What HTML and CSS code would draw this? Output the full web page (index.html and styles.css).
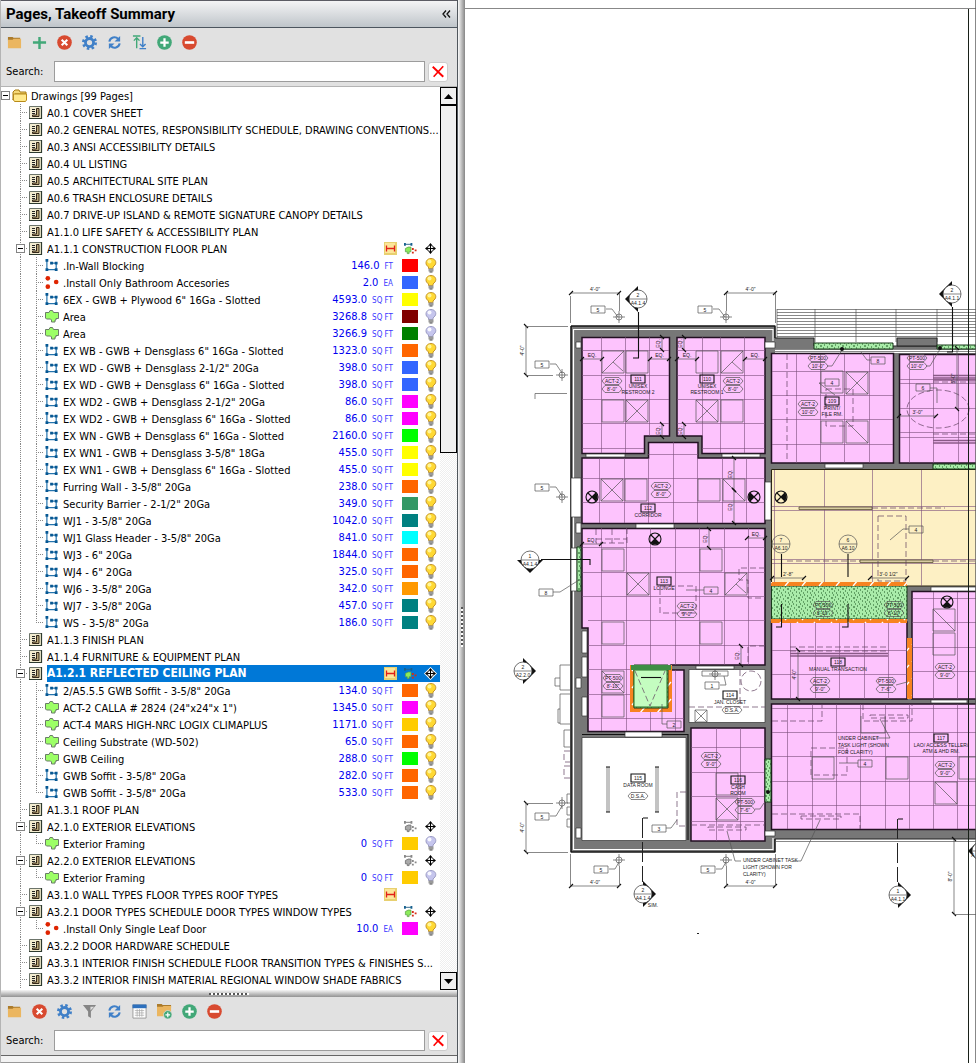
FILE: index.html
```html
<!DOCTYPE html>
<html lang="en">
<head>
    <meta charset="UTF-8">
    <meta name="viewport" content="width=device-width, initial-scale=1.0">
    <title>Takeoff Summary</title>
    <link rel="stylesheet" href="styles.css">
</head>
<body>
    <svg class="defs" aria-hidden="true">
        <symbol id="i-folder" viewBox="0 0 16 16"><path d="M1 2h5l1 1h7v3H1z" fill="#ab7b2c"/><path d="M1 5h5l1-1h8v10H1z" fill="#ebb660"/></symbol>
        <symbol id="i-plus" viewBox="0 0 16 16"><path d="M8 2v13M1 8h14" stroke="#42a878" stroke-width="2.6"/></symbol>
        <symbol id="i-cancel" viewBox="0 0 16 16"><circle cx="8" cy="8" r="7.8" fill="#d84a30"/><path d="M5 5l6 6M11 5l-6 6" stroke="#fff" stroke-width="2.2"/></symbol>
        <symbol id="i-gear" viewBox="0 0 16 16"><circle cx="8" cy="8" r="6.5" fill="none" stroke="#4080c8" stroke-width="3" stroke-dasharray="2.6 2.5"/><circle cx="8" cy="8" r="4.3" fill="none" stroke="#4080c8" stroke-width="3"/></symbol>
        <symbol id="i-refresh" viewBox="0 0 16 16"><path d="M2.5 7a5.5 5.5 0 0 1 9.5-2.8M13.5 9a5.5 5.5 0 0 1-9.5 2.8" fill="none" stroke="#4080c8" stroke-width="2.2"/><path d="M14 1v6H8zM2 15V9h6z" fill="#4080c8"/></symbol>
        <symbol id="i-sort" viewBox="0 0 16 16"><path d="M5 14V3M2 6l3-3 3 3M1 1h8" fill="none" stroke="#42a878" stroke-width="1.5"/><path d="M11.500 2v10M8.500 9.500l3 3 3-3M8 14.500h7" fill="none" stroke="#4080c8" stroke-width="1.5"/></symbol>
        <symbol id="i-add" viewBox="0 0 16 16"><circle cx="8" cy="8" r="7.8" fill="#42a878"/><path d="M8 3.500v9M3.500 8h9" stroke="#fff" stroke-width="2.4"/></symbol>
        <symbol id="i-remove" viewBox="0 0 16 16"><circle cx="8" cy="8" r="7.8" fill="#d84a30"/><path d="M3 8h10" stroke="#fff" stroke-width="2.8"/></symbol>
        <symbol id="i-filter" viewBox="0 0 16 16"><path d="M1 1h14L9.500 8v7l-3-2V8z" fill="#858585"/><path d="M9 3h4L9 7z" fill="#ddd"/></symbol>
        <symbol id="i-table" viewBox="0 0 16 16"><path d="M1 1h14v14H1z" fill="#fff" stroke="#999"/><path d="M.5.5h15v4H.5z" fill="#2d70bd"/><path d="M3 7h10M3 9.500h10M3 12h10M5.500 5.500v8M8 5.500v8M10.500 5.500v8" stroke="#aaa" stroke-width=".8"/></symbol>
        <symbol id="i-folder-add" viewBox="0 0 16 16"><path d="M0 0h5l1 1h9v3H0z" fill="#ab7b2c"/><path d="M0 3h6l1-1h8v11H0z" fill="#ebb660"/><circle cx="11.500" cy="11.500" r="4.500" fill="#42a878" stroke="#e1e1e1" stroke-width=".8"/><path d="M11.500 9v5M9 11.500h5" stroke="#fff" stroke-width="1.3"/></symbol>
        <symbol id="i-clear" viewBox="0 0 16 16"><path d="M2 2l12 11.500" stroke="#f00" stroke-width="2.2"/><path d="M14 1.500L3 13.500" stroke="#f00" stroke-width="1.8"/></symbol>

        <symbol id="t-root" viewBox="0 0 16 16"><path d="M1 4l2-2h4l1 2h6v2H3l-2 6z" fill="#f5d978" stroke="#a77b10"/><path d="M1.500 6h13v6l-1 1.500h-11l-1-1.500z" fill="#ffe98c" stroke="#b88a18"/></symbol>
        <symbol id="t-page" viewBox="0 0 14 14"><path d="M.5.5h12v12H.5z" fill="#f3ecd0" stroke="#6c746a"/><path d="M12.500 0v12.500H0" fill="none" stroke="#2d3a2f" stroke-width="1.200"/><path d="M3 3.500h3M3 5.500h3M3 7.500h3" stroke="#222"/><path d="M7.500 2.500h2.500v8H3.500V9h4z" fill="#b9a777" stroke="#332619"/></symbol>
        <symbol id="t-line" viewBox="0 0 14 14"><path d="M1.500 2v10M1.500 11.500h10M11.500 11V4.500M6 4.500h6" fill="none" stroke="#2474ae" stroke-width="1.300"/><path d="M0 0h3v3H0zM0 10h3v3H0zM10 10h3v3h-3zM10 3h3v3h-3zM5 3h3v3H5z" fill="#075893"/></symbol>
        <symbol id="t-count" viewBox="0 0 15 14"><g fill="#df2400"><circle cx="3" cy="2.500" r="2.500"/><circle cx="12" cy="6.500" r="2.500"/><circle cx="3" cy="11.500" r="2.500"/></g></symbol>
        <symbol id="t-area" viewBox="0 0 14 13"><path d="M.5 2.500h3.500l1-2h2.500l1 2h5v6h-2.500V10h-1v2H6.500v-2l-1-1h-4l-1-1z" fill="#9cff66" stroke="#6b7d68"/></symbol>
        <symbol id="t-note" viewBox="0 0 13 13"><path d="M0 0h13v13H0z" fill="#e8d070"/><path d="M1 1h10v10H1z" fill="#fce69a"/><path d="M2.500 3.500v6M10.500 3.500v6M3 6.500h7" stroke="#e22018" stroke-width="1.300"/></symbol>
        <symbol id="t-takeoff" viewBox="0 0 14 13"><path d="M1 2h7" stroke="#28628a"/><path d="M0 .5h2v3H0zM7 .5h2v3H7z" fill="#17618e"/><path d="M1.500 6.500l3-1.500h3v5h-2v2h-2V10h-2z" fill="#8cec5a" stroke="#5c9f4a" stroke-width=".8"/><path d="M8.500 6h2v2h-2zM11.500 7.500h2v2h-2zM8.500 10h2v2h-2z" fill="#d52c16"/></symbol>
        <symbol id="t-takeoff-off" viewBox="0 0 14 13"><path d="M1 2h7" stroke="#777"/><path d="M0 .5h2v3H0zM7 .5h2v3H7zM8.500 6h2v2h-2zM11.500 7.500h2v2h-2zM8.500 10h2v2h-2z" fill="#888"/><path d="M1.500 6.500l3-1.500h3v5h-2v2h-2V10h-2z" fill="#aaa" stroke="#777"/></symbol>
        <symbol id="t-move" viewBox="0 0 13 13"><path d="M6.500 1l2 2.500h-4zM6.500 12l2-2.500h-4zM1 6.500l2.500-2v4zM12 6.500l-2.500-2v4z" fill="#000"/><circle cx="6.500" cy="6.500" r="3.200" fill="#fff" stroke="#000" stroke-width=".8"/><path d="M6.500 2v9M2 6.500h9" stroke="#000"/></symbol>
        <symbol id="t-move-sel" viewBox="0 0 13 13"><path d="M6.500 0L13 6.500 6.500 13 0 6.500z" fill="#fff"/><path d="M6.500 1l2 2.500h-4zM6.500 12l2-2.500h-4zM1 6.500l2.500-2v4zM12 6.500l-2.500-2v4z" fill="#000"/><circle cx="6.500" cy="6.500" r="3.200" fill="#fff" stroke="#000" stroke-width=".8"/><path d="M6.500 2v9M2 6.500h9" stroke="#000"/></symbol>
        <symbol id="t-bulb" viewBox="0 0 12 15"><path d="M3.500 9L1.500 7C0 4 2 .5 6 .5S12 4 10 7L8 9v1.500H3.500z" fill="#ffd934" stroke="#c5952b"/><circle cx="4.500" cy="3.500" r="2" fill="#fff59b"/><path d="M3.500 10.500h5v3h-5z" fill="#999"/><path d="M4.500 13.500h3v1h-3z" fill="#444"/></symbol>
        <symbol id="t-bulb-off" viewBox="0 0 12 15"><path d="M3.500 9L1.500 7C0 4 2 .5 6 .5S12 4 10 7L8 9v1.500H3.500z" fill="#c5c5ed" stroke="#9c9cc4"/><circle cx="4.500" cy="3.500" r="2" fill="#f7f7ff"/><path d="M3.500 10.500h5v3h-5z" fill="#999"/><path d="M4.500 13.500h3v1h-3z" fill="#444"/></symbol>
    </svg>

    <div class="app">
        <aside class="sidebar">
            <header class="panel-title">
                <h1>Pages, Takeoff Summary</h1>
                <button class="collapse" aria-label="Collapse panel"><svg viewBox="0 0 9 8"><path d="M4 .5L1 4l3 3.500M8 .5L5 4l3 3.500" fill="none" stroke="#111" stroke-width="1.300"/></svg></button>
            </header>
            <div class="toolbar">
                <button aria-label="Open"><svg><use href="#i-folder"/></svg></button>
                <button aria-label="New"><svg><use href="#i-plus"/></svg></button>
                <button aria-label="Delete"><svg><use href="#i-cancel"/></svg></button>
                <button aria-label="Settings"><svg><use href="#i-gear"/></svg></button>
                <button aria-label="Refresh"><svg><use href="#i-refresh"/></svg></button>
                <button aria-label="Sort"><svg><use href="#i-sort"/></svg></button>
                <button aria-label="Expand all"><svg><use href="#i-add"/></svg></button>
                <button aria-label="Collapse all"><svg><use href="#i-remove"/></svg></button>
            </div>
            <div class="search">
                <label for="pageSearch">Search:</label>
                <input type="text" id="pageSearch">
                <button aria-label="Clear search"><svg><use href="#i-clear"/></svg></button>
            </div>
            <div class="tree-panel">
                <ul class="tree" id="tree"></ul>
                <div class="scrollbar">
                    <button aria-label="Scroll up"><svg viewBox="0 0 9 5"><path d="M0 5l4.500-5L9 5z"/></svg></button>
                    <div class="thumb"></div>
                    <div class="track"></div>
                    <button aria-label="Scroll down"><svg viewBox="0 0 9 5"><path d="M0 0l4.500 5L9 0z"/></svg></button>
                </div>
            </div>
            <div class="splitter-h"><span></span></div>
            <div class="toolbar">
                <button aria-label="Open folder"><svg><use href="#i-folder"/></svg></button>
                <button aria-label="Delete takeoff"><svg><use href="#i-cancel"/></svg></button>
                <button aria-label="Takeoff settings"><svg><use href="#i-gear"/></svg></button>
                <button aria-label="Filter"><svg><use href="#i-filter"/></svg></button>
                <button aria-label="Refresh takeoffs"><svg><use href="#i-refresh"/></svg></button>
                <button aria-label="Columns"><svg><use href="#i-table"/></svg></button>
                <button aria-label="New folder"><svg><use href="#i-folder-add"/></svg></button>
                <button aria-label="Expand"><svg><use href="#i-add"/></svg></button>
                <button aria-label="Collapse"><svg><use href="#i-remove"/></svg></button>
            </div>
            <div class="search">
                <label for="takeoffSearch">Search:</label>
                <input type="text" id="takeoffSearch">
                <button aria-label="Clear takeoff search"><svg><use href="#i-clear"/></svg></button>
            </div>
            <div class="next-panel"></div>
        </aside>
        <div class="splitter-v"><span></span></div>
        <main class="drawing">
            <svg id="plan" viewBox="465 0 511 1063" preserveAspectRatio="xMinYMin meet" role="img" aria-label="Reflected ceiling plan">
                <defs>
                    <pattern id="speckle" width="11" height="9" patternUnits="userSpaceOnUse">
                        <rect width="11" height="9" fill="#a9eca9"/>
                        <path d="M1 1h1M4 2h1M8 1h1M6 4h2M2 5h1M9 6h1M4 7h1M7 8h1M0 8h1M10 3h1" stroke="#1d5722"/>
                    </pattern>
                    <pattern id="hatch" width="17" height="17" patternUnits="userSpaceOnUse">
                        <rect width="17" height="17" fill="#f78320"/>
                        <path d="M3 8l5-6M11 16l5-6" stroke="#fff" stroke-width="1.300"/>
                    </pattern>
                </defs>
            </svg>
        </main>
    </div>
    <script src="app.js"></script>
</body>
</html>
```

FILE: styles.css
```css
* {
    box-sizing: border-box;
}
body {
    margin: 0;
    font-family: "DejaVu Sans Condensed", "DejaVu Sans", sans-serif;
    font-size: 11px;
    color: #000;
}
button {
    padding: 0;
    border: none;
    background: none;
    cursor: pointer;
}
svg {
    display: block;
}
.defs {
    display: none;
}
.app {
    display: grid;
    grid-template-columns: 458px 7px 1fr;
    height: 100vh;
    overflow: hidden;
}

/* left side */
.sidebar {
    display: flex;
    flex-direction: column;
    min-height: 0;
    background: #e1e1e1;
    border-left: 1px solid #b4b4b4;
    border-right: 1px solid #50565c;
}
.panel-title {
    display: flex;
    align-items: center;
    justify-content: space-between;
    height: 28px;
    padding: 0 6px 0 5px;
    background: linear-gradient(#f4f4f5, #bfc5ca);
    border-top: 1px solid #5c5c64;
    border-bottom: 1px solid #4c555e;
}
.panel-title h1 {
    margin: 0;
    font-family: Roboto, "Liberation Sans", Arial, sans-serif;
    font-size: 15px;
}
.collapse svg {
    width: 9px;
    height: 8px;
}
.toolbar {
    display: flex;
    gap: 10px;
    padding: 7px 6px;
    height: 29px;
}
.toolbar button,
.toolbar svg {
    width: 15px;
    height: 15px;
}
.search {
    display: flex;
    align-items: center;
    height: 29px;
    padding: 0 9px 0 5px;
}
.search label {
    width: 48px;
}
.search input {
    flex: 1;
    min-width: 0;
    height: 21px;
    border: 1px solid #9c9c9c;
    background: #fff;
    font: inherit;
}
.search button {
    display: flex;
    align-items: center;
    justify-content: center;
    width: 20px;
    height: 20px;
    margin-left: 3px;
    background: #fff;
    border: 1px solid #ccc;
    border-radius: 3px;
}
.search svg {
    width: 14px;
    height: 14px;
}

/* page tree */
.tree-panel {
    display: flex;
    flex: 1;
    min-height: 0;
    border-top: 1px solid #b4b4b4;
    background: #fff;
}
.tree {
    flex: 1;
    min-width: 0;
    margin: 0;
    padding: 0;
    list-style: none;
    overflow: hidden;
}
.row {
    display: flex;
    align-items: center;
    height: 17px;
    white-space: nowrap;
}
.row.level-1,
.row.level-2 {
    padding-left: 11px;
}
.guide {
    display: flex;
    align-items: center;
    flex: none;
    width: 16px;
    height: 17px;
    background: repeating-linear-gradient(#888 0 1px, #fff 1px 2px) 8px 0 / 1px 100% no-repeat;
}
.guide.branch {
    background:
        repeating-linear-gradient(#888 0 1px, #fff 1px 2px) 8px 0 / 1px 100% no-repeat,
        repeating-linear-gradient(90deg, #888 0 1px, #fff 1px 2px) 8px 8px / 7px 1px no-repeat;
}
.guide.last {
    background-size: 1px 9px, 7px 1px;
}
.box {
    position: relative;
    width: 9px;
    height: 9px;
    margin-left: 4px;
    border: 1px solid #848484;
    background: #fff;
}
.level-0 .box {
    flex: none;
    margin: 0 2px 0 0;
}
.box::after {
    content: "";
    position: absolute;
    left: 1px;
    top: 3px;
    width: 5px;
    height: 1px;
    background: #000;
}
.kind {
    flex: none;
    width: 19px;
}
.kind svg {
    width: 14px;
    height: 14px;
    margin-left: 1px;
}
.level-0 .kind svg {
    width: 16px;
    height: 16px;
    margin-left: 0;
}
.level-2 .kind svg {
    height: 13px;
}
.name {
    flex: 1;
    min-width: 0;
    height: 17px;
    line-height: 19px;
    overflow: hidden;
}
.selected .name {
    font-size: 12px;
    font-weight: bold;
    line-height: 17px;
}
.selected .name,
.selected .marks {
    color: #fff;
    background: #0078d7;
}
.amount {
    margin-right: 9px;
    color: #0000f0;
    line-height: 19px;
}
.amount small {
    margin-left: 2px;
    font-size: 8px;
    color: #3a3aff;
}
.swatch {
    width: 16px;
    height: 13px;
    margin-right: 4px;
}
.bulb {
    width: 18px;
}
.bulb svg {
    width: 12px;
    height: 15px;
    margin-left: 3px;
}
.marks {
    display: flex;
    align-items: center;
    height: 17px;
}
.marks svg {
    width: 13px;
    height: 13px;
    margin-right: 7px;
}
.marks svg:last-child {
    margin-right: 3px;
}

/* scroll bar */
.scrollbar {
    display: flex;
    flex-direction: column;
    width: 17px;
}
.scrollbar button {
    display: flex;
    align-items: center;
    justify-content: center;
    height: 18px;
    background: #f0f0f0;
    border: 1px solid #000;
}
.scrollbar svg {
    width: 9px;
    height: 5px;
}
.thumb {
    flex: 2 1 0;
    background: #f0f0f0;
    border: 1px solid #000;
}
.track {
    flex: 3 1 0;
    background: repeating-conic-gradient(#fff 0 25%, #eee 0 50%) 0 0 / 2px 2px;
}

/* splitters */
.splitter-h,
.splitter-v {
    display: flex;
    align-items: center;
    justify-content: center;
}
.splitter-h {
    height: 7px;
    background: linear-gradient(#f6f6f6, #929292);
}
.splitter-h span {
    width: 40px;
    height: 2px;
    background: repeating-linear-gradient(90deg, #555 0 2px, #fff 2px 4px);
}
.splitter-v {
    background: linear-gradient(90deg, #fafafa, #868686);
}
.splitter-v span {
    width: 2px;
    height: 40px;
    margin-top: 190px;
    background: repeating-linear-gradient(#555 0 2px, #fff 2px 4px);
}
.next-panel {
    height: 8px;
    border-top: 1px solid #666;
    border-bottom: 1px solid #999;
    background: #f3f3f3;
}

/* drawing */
.drawing {
    min-width: 0;
    background: #fff;
    overflow: hidden;
}
#plan {
    width: 100%;
    height: 100%;
    font-family: "Liberation Sans", Arial, sans-serif;
    font-size: 5px;
}
#plan text {
    text-anchor: middle;
    fill: #222;
}
#plan .left {
    text-anchor: start;
}
#plan .wall {
    fill: #777;
    stroke: #222;
}
#plan .pink {
    fill: #fdc3fd;
    stroke: #221022;
    stroke-width: 1.5;
}
#plan .yellow {
    fill: #fdf0c4;
    stroke: #28220e;
}
#plan .white {
    fill: #fff;
    stroke: #333;
    stroke-width: .7;
}
#plan .open {
    fill: #fff;
}
#plan .speckle {
    fill: url(#speckle);
    stroke: #173b19;
}
#plan .hatch {
    fill: url(#hatch);
}
#plan .grid {
    fill: none;
    stroke: #7a4d7a;
    stroke-width: .6;
}
#plan .thin {
    fill: none;
    stroke: #555;
    stroke-width: .7;
}
#plan .dash {
    fill: none;
    stroke: #60405f;
    stroke-width: .7;
    stroke-dasharray: 6 3;
}
#plan .bold {
    fill: none;
    stroke: #111;
    stroke-width: 1.1;
}
#plan .band {
    fill: none;
    stroke: #8a5a88;
    stroke-width: 1.5;
}
#plan .beam {
    fill: #d8cca0;
    stroke: #5c5336;
    stroke-width: .8;
}
#plan .black {
    fill: #111;
}
```

FILE: app.js
```js
// [level, kind, name, amount, unit, colour, lamp off]
const rows = [
    [0, 'root', 'Drawings [99 Pages]'],
    [1, 'page', 'A0.1 COVER SHEET'],
    [1, 'page', 'A0.2 GENERAL NOTES, RESPONSIBILITY SCHEDULE, DRAWING CONVENTIONS...'],
    [1, 'page', 'A0.3 ANSI ACCESSIBILITY DETAILS'],
    [1, 'page', 'A0.4 UL LISTING'],
    [1, 'page', 'A0.5 ARCHITECTURAL SITE PLAN'],
    [1, 'page', 'A0.6 TRASH ENCLOSURE DETAILS'],
    [1, 'page', 'A0.7 DRIVE-UP ISLAND & REMOTE SIGNATURE CANOPY DETAILS'],
    [1, 'page', 'A1.1.0 LIFE SAFETY & ACCESSIBILITY PLAN'],
    [1, 'page', 'A1.1.1 CONSTRUCTION FLOOR PLAN', 'note takeoff move'],
    [2, 'line', '.In-Wall Blocking', '146.0', 'FT', '#ff0000'],
    [2, 'count', '.Install Only Bathroom Accesories', '2.0', 'EA', '#3366ff'],
    [2, 'line', '6EX - GWB + Plywood 6" 16Ga - Slotted', '4593.0', 'SQ FT', '#ffff00'],
    [2, 'area', 'Area', '3268.8', 'SQ FT', '#800000', true],
    [2, 'area', 'Area', '3266.9', 'SQ FT', '#008000', true],
    [2, 'line', 'EX WB - GWB + Densglass 6" 16Ga - Slotted', '1323.0', 'SQ FT', '#ff6600'],
    [2, 'line', 'EX WD - GWB + Densglass 2-1/2" 20Ga', '398.0', 'SQ FT', '#3366ff'],
    [2, 'line', 'EX WD - GWB + Densglass 6" 16Ga - Slotted', '398.0', 'SQ FT', '#3366ff'],
    [2, 'line', 'EX WD2 - GWB + Densglass 2-1/2" 20Ga', '86.0', 'SQ FT', '#ff00ff'],
    [2, 'line', 'EX WD2 - GWB + Densglass 6" 16Ga - Slotted', '86.0', 'SQ FT', '#ff00ff'],
    [2, 'line', 'EX WN - GWB + Densglass 6" 16Ga - Slotted', '2160.0', 'SQ FT', '#00ff00'],
    [2, 'line', 'EX WN1 - GWB + Densglass 3-5/8" 18Ga', '455.0', 'SQ FT', '#ffff00'],
    [2, 'line', 'EX WN1 - GWB + Densglass 6" 16Ga - Slotted', '455.0', 'SQ FT', '#ffff00'],
    [2, 'line', 'Furring Wall - 3-5/8" 20Ga', '238.0', 'SQ FT', '#ff6600'],
    [2, 'line', 'Security Barrier - 2-1/2" 20Ga', '349.0', 'SQ FT', '#339966'],
    [2, 'line', 'WJ1 - 3-5/8" 20Ga', '1042.0', 'SQ FT', '#008080'],
    [2, 'line', 'WJ1 Glass Header - 3-5/8" 20Ga', '841.0', 'SQ FT', '#00ffff'],
    [2, 'line', 'WJ3 - 6" 20Ga', '1844.0', 'SQ FT', '#ff6600'],
    [2, 'line', 'WJ4 - 6" 20Ga', '325.0', 'SQ FT', '#ff6600'],
    [2, 'line', 'WJ6 - 3-5/8" 20Ga', '342.0', 'SQ FT', '#ff9900'],
    [2, 'line', 'WJ7 - 3-5/8" 20Ga', '457.0', 'SQ FT', '#008080'],
    [2, 'line', 'WS - 3-5/8" 20Ga', '186.0', 'SQ FT', '#008080'],
    [1, 'page', 'A1.1.3 FINISH PLAN'],
    [1, 'page', 'A1.1.4 FURNITURE & EQUIPMENT PLAN'],
    [1, 'page', 'A1.2.1 REFLECTED CEILING PLAN', 'note takeoff move-sel'],
    [2, 'line', '2/A5.5.5 GWB Soffit - 3-5/8" 20Ga', '134.0', 'SQ FT', '#ff6600'],
    [2, 'area', 'ACT-2 CALLA # 2824 (24"x24"x 1")', '1345.0', 'SQ FT', '#ff00ff'],
    [2, 'area', 'ACT-4 MARS HIGH-NRC LOGIX CLIMAPLUS', '1171.0', 'SQ FT', '#ffcc00'],
    [2, 'area', 'Ceiling Substrate (WD-502)', '65.0', 'SQ FT', '#ff6600'],
    [2, 'area', 'GWB Ceiling', '288.0', 'SQ FT', '#00ff00'],
    [2, 'line', 'GWB Soffit - 3-5/8" 20Ga', '282.0', 'SQ FT', '#ff6600'],
    [2, 'line', 'GWB Soffit - 3-5/8" 20Ga', '533.0', 'SQ FT', '#ff6600'],
    [1, 'page', 'A1.3.1 ROOF PLAN'],
    [1, 'page', 'A2.1.0 EXTERIOR ELEVATIONS', 'takeoff-off move'],
    [2, 'area', 'Exterior Framing', '0', 'SQ FT', '#ffcc00', true],
    [1, 'page', 'A2.2.0 EXTERIOR ELEVATIONS', 'takeoff-off move'],
    [2, 'area', 'Exterior Framing', '0', 'SQ FT', '#ffcc00', true],
    [1, 'page', 'A3.1.0 WALL TYPES FLOOR TYPES ROOF TYPES', 'note blank blank'],
    [1, 'page', 'A3.2.1 DOOR TYPES SCHEDULE DOOR TYPES WINDOW TYPES', 'takeoff move'],
    [2, 'count', '.Install Only Single Leaf Door', '10.0', 'EA', '#ff00ff'],
    [1, 'page', 'A3.2.2 DOOR HARDWARE SCHEDULE'],
    [1, 'page', 'A3.3.1 INTERIOR FINISH SCHEDULE FLOOR TRANSITION TYPES & FINISHES S...'],
    [1, 'page', 'A3.3.2 INTERIOR FINISH MATERIAL REGIONAL WINDOW SHADE FABRICS']
];

const icon = id => `<svg><use href="#t-${id}"/></svg>`;

document.getElementById('tree').innerHTML = rows.map((row, i) => {
    const [level, kind, name, amount, unit, colour, off] = row;
    const next = rows[i + 1];
    const box = next && next[0] > level ? '<span class="box"></span>' : '';
    let html = '';
    if (level === 0) html += box;
    if (level === 1) html += `<span class="guide branch">${box}</span>`;
    if (level === 2) {
        const last = !next || next[0] < 2 ? ' last' : '';
        html += `<span class="guide"></span><span class="guide branch${last}"></span>`;
    }
    html += `<span class="kind">${icon(kind)}</span>`;
    html += `<span class="name">${name.replace(/&/g, '&amp;')}</span>`;
    if (level === 2) {
        html += `<span class="amount">${amount} <small>${unit}</small></span>`;
        html += `<span class="swatch" style="background:${colour}"></span>`;
        html += `<span class="bulb">${icon(off ? 'bulb-off' : 'bulb')}</span>`;
    } else if (amount) {
        html += `<span class="marks">${amount.split(' ').map(icon).join('')}</span>`;
    }
    const selected = name.startsWith('A1.2.1') ? ' selected' : '';
    return `<li class="row level-${level}${selected}">${html}</li>`;
}).join('');

// ---- plan ----
let out = '';
const path = (cls, d) => out += `<path class="${cls}" d="${d}"/>`;
const rect = (cls, x1, y1, x2, y2) => path(cls, `M${x1} ${y1}H${x2}V${y2}H${x1}z`);
const text = (x, y, s, cls = '') => out += `<text class="${cls}" x="${x}" y="${y}">${s}</text>`;
const grid = (x1, y1, x2, y2, xs, ys) =>
    path('grid', xs.map(x => `M${x} ${y1}V${y2}`).join('') + ys.map(y => `M${x1} ${y}H${x2}`).join(''));

// ceiling light: 0 empty, 1 crossed, 2 falling diagonal, 3 rising diagonal
function light(x, y, type = 0) {
    let d = `M${x - 11} ${y - 11}h22v22h-22z`;
    if (type === 1) d += `M${x - 11} ${y - 11}l22 22m0-22l-22 22`;
    if (type === 2) d += `M${x - 11} ${y - 11}l22 22`;
    if (type === 3) d += `M${x + 11} ${y - 11}l-22 22M${x} ${y}l10 9`;
    path('thin', d);
}
function tag(x, y, number, ...lines) {
    path('bold', `M${x - 7} ${y - 4}h14v8h-14z`);
    text(x, y + 2, number);
    lines.forEach((line, i) => text(x, y + 9 + i * 6, line));
}
function hex(x, y, ...lines) {
    lines.forEach((line, i) => {
        const cy = y + i * 8;
        path('thin', `M${x - 7} ${cy - 3.5}h14l3 3.5-3 3.500h-14l-3-3.500z`);
        text(x, cy + 2, line);
    });
}
function note(x, y, n, d) {
    path('thin', `M${x - 7} ${y - 4}h14v7h-14z${d || ''}`);
    text(x, y + 2, n);
}
function section(x, y, dir, top, bottom) {
    const turn = { right: 0, down: 90, left: 180 }[dir];
    out += `<path class="black" transform="rotate(${turn} ${x} ${y})" d="M${x + 13} ${y}L${x} ${y - 13}V${y + 13}z"/>`;
    out += `<circle class="white" cx="${x}" cy="${y}" r="9"/>`;
    path('thin', `M${x - 9} ${y}h18`);
    text(x, y - 2, top);
    text(x, y + 6, bottom);
}
function exitSign(x, y, turn) {
    out += `<g transform="rotate(${turn} ${x} ${y})"><circle class="bold" cx="${x}" cy="${y}" r="6"/>
        <path class="bold" d="M${x - 4} ${y - 4}l8 8m0-8l-8 8"/><path class="black" d="M${x} ${y}l4-4a6 6 0 0 1 0 8z"/></g>`;
}
function dimH(x1, x2, y, label) {
    path('thin', `M${x1} ${y}H${x2}`);
    path('bold', `M${x1 - 2} ${y + 2}l4-4M${x2 - 2} ${y + 2}l4-4`);
    text((x1 + x2) / 2, y - 2, label);
}
function dimV(y1, y2, x, label) {
    path('thin', `M${x} ${y1}V${y2}`);
    path('bold', `M${x - 2} ${y1 - 2}l4 4M${x - 2} ${y2 - 2}l4 4`);
    const y = (y1 + y2) / 2;
    out += `<text transform="rotate(-90 ${x - 2} ${y})" x="${x - 2}" y="${y}">${label}</text>`;
}
function target(x, y) {
    out += `<circle class="thin" cx="${x}" cy="${y}" r="3"/>`;
    path('thin', `M${x - 6} ${y}h12M${x} ${y - 6}v12`);
}

// canopy
let canopy = '';
for (let y = 309; y < 339; y += 3) canopy += `M777 ${y}.5H976`;
[777, 815, 856, 896, 937].forEach(x => canopy += `M${x} 309V342`);
path('thin', canopy);

// walls
path('wall', 'M571 326H775V338H814V346H976V839H775V852H571z');
path('bold', 'M571 326H775V338M571 326V852H775V839');
out += '<path d="M573.500 840V329.500H773V341M573.500 840V849.500H773V838" fill="none" stroke="#fff" stroke-width="1.200"/>';
rect('wall', 897, 338, 937, 346);
rect('open', 775, 349, 976, 353);
path('thin', 'M775 349.500H976M775 351.500H976M775 841.500H976');
rect('speckle', 814, 343, 893, 349);
rect('speckle', 937, 345, 976, 349);

// restrooms and corridor
path('pink', 'M582 337.500H669.500V436H644.500V453.500H582z');
path('pink', 'M677 337.500H765V453.500H702V436H677z');
path('pink', 'M582 458H648.500V442.500H698V458H765V523.500H582z');
grid(582, 337, 669, 436, [601.5, 625.5, 649.5], [350.5, 375.5, 399.5, 423.5]);
grid(677, 337, 765, 436, [702.5, 720.5, 744.5], [350.5, 375.5, 399.5, 423.5]);
grid(582, 458, 765, 523, [599.5, 624.5, 648.5, 673.5, 697.5, 722.5, 746.5], [478.5, 502.5]);
path('grid', 'M601.500 436V453M625.500 436V453M582 448.500H644M720.500 436V453M744.500 436V453M702 448.500H765M673.500 442V458M648 454.500H698');

// lounge
path('pink', 'M582 528.500H765V665H671V670H684V731.500H588V628H582z');
grid(588, 528, 765, 665, [601.5, 626.5, 650.5, 675.5, 699.5, 724.5, 748.5], [547.5, 572.5, 596.5, 620.5, 645.5]);
path('grid', 'M601.500 665V731M626.500 665V731M650.500 712V731M588 669.500H630M588 694.500H630M588 718.500H684M675.500 670V731M582 547.500h6M582 572.500h6M582 596.500h6');
path('dash', 'M596 529V543H627V529M596 539H627M612 529V543M660 586H696V613H660zM765 568H739V580H748V598H765M765 646H748V664');

// print room and conference
rect('pink', 771.5, 353.5, 893.5, 463);
rect('pink', 899.5, 354.5, 978, 463);
grid(772, 354, 893, 463, [796.5, 820.5, 844.5, 869.5], [371.5, 395.5, 419.5, 444.5]);
grid(900, 355, 976, 463, [909.5, 933.5, 958.5], [379.5, 383.5, 408.5, 432.5, 437.5]);
path('dash', 'M787 354V463M933 382H976M933 434H976M826 389h27v37h-27z');
path('band', 'M933 375.500H976M933 378H976M933 380H976M933 440.500H976M933 443H976');
out += '<ellipse class="dash" cx="938" cy="409" rx="31" ry="19"/>';

// yellow area
rect('yellow', 771.5, 469.5, 978, 586);
grid(772, 470, 976, 586, [774.5, 824.5, 872.5, 921.5], [506.5, 510.5, 559.5, 563.5]);
path('beam', 'M799 507H872V509.500H799zM860 560H933V562.500H860z');
path('dash', 'M878 516h28v65h-28zM872 508H945M787 561H860M933 561H976');

// counter
rect('speckle', 771.5, 586, 907, 619);
rect('hatch', 771, 582, 907, 586);
rect('pink', 771.5, 622, 907, 699);
rect('hatch', 771, 619, 907, 623);
grid(772, 623, 907, 699, [790.5, 815.5, 839.5, 864.5, 888.5], [650.5, 674.5]);
path('dash', 'M790 647H888M790 651H888');
path('band', 'M790 653.500H888M790 656H888');
rect('pink', 912, 591.5, 978, 699);
grid(912, 592, 976, 699, [933.5, 957.5], [598.5, 622.5, 647.5, 671.5]);
rect('hatch', 907, 638, 912, 699);

// teller room
rect('pink', 771.5, 704, 978, 829.5);
grid(772, 704, 976, 829, [787.5, 812.5, 836.5, 860.5, 885.5, 909.5, 933.5, 957.5], [708.5, 732.5, 756.5, 781.5, 805.5]);
path('dash', 'M772 721H822V704M863 704V721H912V704M772 814H860V829M811 748h36v27h-36zM801 816h40v3h-40zM870 715h38v3h-38z');
path('thin', 'M861 716V733H885V716');

// closet, data room, cash room
rect('white', 689, 669.5, 765, 722.5);
rect('white', 582, 737.5, 686, 840.5);
rect('pink', 691, 728, 765, 841);
grid(691, 728, 765, 841, [716.5, 740.5], [747.5, 772.5, 796.5, 821.5]);
path('dash', 'M691 825H765M708 827h38v3h-38zM689 707H765M740 670V707M686 792H677V826H686');
path('bold', 'M582 734.500H625M662 734.500H688V840');
path('thin', 'M607 767V812M609 767V812M656 767V812M658 767V812');
path('bold', 'M606 767h4M606 812h4M655 767h4M655 812h4');
out += '<circle class="dash" cx="751" cy="681" r="10"/>';
path('thin', 'M695 710h12v12h-12zM695 710l12 12m0-12l-12 12M702 671h26v5h-26z');
target(715, 674);

// doors and windows
[
    [586, 454, 625, 457], [722, 454, 760, 457], [576, 342, 581, 348], [765, 342, 775, 348],
    [571, 478, 581, 517], [765, 482, 771, 520], [636, 524, 674, 528], [576, 523, 581, 533],
    [571, 548, 577, 591], [582, 631, 587, 653], [582, 657, 587, 677], [582, 697, 587, 716],
    [576, 678, 581, 688], [825, 464, 863, 468], [696, 666, 734, 669], [625, 732, 662, 737],
    [931, 587, 976, 591], [931, 700, 967, 703], [765, 831, 775, 836], [576, 828, 581, 838]
].forEach(([x1, y1, x2, y2]) => rect('white', x1, y1, x2, y2));
rect('speckle', 577, 547, 581, 591);
rect('speckle', 933, 464, 976, 469);
rect('speckle', 765, 759, 771, 802);

// soffit opening
rect('hatch', 630, 665, 672, 712);
rect('speckle', 634, 665, 668, 708);
out += '<path d="M634 670h33v37h-33z" fill="#c4fdc0" stroke="#277027"/><path d="M631 665h40v5h-40z" fill="#3e8e45"/>';
path('dash', 'M635 671L650 706L665 671');
path('bold', 'M641 677.500H661');

// lights
light(613, 362, 3); light(637, 362); light(613, 411); light(637, 411, 1);
light(707, 362); light(732, 362, 3); light(707, 411, 1); light(732, 411);
light(612, 490, 1); light(636, 490); light(709, 490); light(734, 490, 2);
light(613, 560); light(711, 560); light(638, 584, 1); light(736, 584, 3);
light(613, 633); light(711, 633); light(613, 682, 2); light(613, 706);
light(832, 382); light(857, 383, 1); light(832, 432); light(857, 432, 2);
light(944, 620, 2); light(944, 644); light(727, 784); light(727, 809, 1);
light(823, 768); light(897, 768); light(946, 793, 2); light(970, 768);

exitSign(592, 497, 0);
exitSign(754, 497, 180);
exitSign(655, 539, 90);
exitSign(781, 497, 0);
exitSign(947, 602, 90);

// room names
tag(638, 379, '111', 'UNISEX', 'RESTROOM 2');
tag(707, 379, '110', 'UNISEX', 'RESTROOM 1');
tag(648, 508, '112', 'CORRIDOR');
tag(664, 581, '113', 'LOUNGE');
tag(832, 401, '109', 'PRINT/', 'FILE RM.');
tag(838, 662, '118', 'MANUAL TRANSACTION');
tag(730, 695, '114', 'JAN. CLOSET');
tag(638, 778, '115', 'DATA ROOM');
tag(738, 780, '116', 'CASH', 'ROOM');
tag(941, 738, '117', 'LAO/ ACCESS TELLER/', 'ATM &amp; AHD RM.');
hex(612, 381, 'ACT-2', "8'-0\"");
hex(733, 381, 'ACT-2', "8'-0\"");
hex(661, 486, 'ACT-2', "8'-0\"");
hex(687, 606, 'ACT-2', "9'-0\"");
hex(613, 678, 'PT-500', "8'-10\"");
hex(808, 404, 'ACT-2', "10'-0\"");
hex(818, 358, 'PT-500', "10'-0\"");
hex(917, 358, 'PT-500', "10'-0\"");
hex(823, 605, 'PT-500', "8'-10\"");
hex(894, 605, 'PT-500', "8'-10\"");
hex(820, 681, 'ACT-2', "9'-0\"");
hex(886, 681, 'PT-500', "7'-6\"");
hex(945, 667, 'ACT-2', "9'-0\"");
hex(945, 765, 'ACT-2', "9'-0\"");
hex(711, 756, 'ACT-2', "9'-0\"");
hex(745, 802, 'PT-500', "7'-6\"");
hex(732, 710, 'D.S.A.');
hex(638, 796, 'D.S.A.');

// keynotes
note(598, 310, '5', 'M606 309H612L618 317');
note(705, 310, '5', 'M713 309H719L725 317');
note(542, 365, '5', 'M550 364H556L562 373');
note(542, 488, '5', 'M550 487H556L562 496');
note(546, 593, '8', 'M553 592H560L579 580');
note(542, 817, '5', 'M550 816H556L562 806');
note(601, 870, '5', 'M609 869H615L619 862');
note(708, 870, '5', 'M716 869H722L726 862');
note(878, 361, '8', 'M871 360H867L861 352');
note(832, 383, '4', 'M825 383H819L835 395');
note(923, 388, '6', 'M930 388H937V403');
note(916, 530, '4', 'M909 529H903L890 540');
note(711, 591, '4', 'M704 590H686');
note(712, 686, '1', 'M720 685H726L724 676');
note(674, 725, '2', 'M667 724H662V704');
note(659, 829, '3', 'M666 828H671L677 820');
note(865, 764, '4', 'M858 763H839');
[[619, 317], [726, 317], [562, 375], [562, 497], [562, 803], [619, 860], [726, 860]].forEach(p => target(...p));

// dimensions
dimH(571, 619, 293, "4'-0\"");
dimH(726, 775, 293, "4'-0\"");
dimH(571, 619, 886, "4'-0\"");
dimH(726, 775, 886, "4'-0\"");
dimV(326, 375, 526, "4'-0\"");
dimV(803, 852, 526, "4'-0\"");
dimV(839, 914, 954, "8'-0\"");
dimH(772, 804, 578, "2'-8\"");
dimH(870, 907, 578, "3'-0 1/2\"");
dimV(650, 699, 798, "4'-0\"");
dimV(348, 409, 957, "5'-0\"");
dimH(899, 936, 416, "3'-0\"");
[[582, 602, 359], [650, 669, 359], [677, 697, 359], [745, 765, 359], [582, 601, 544], [747, 765, 538]]
    .forEach(([a, b, y]) => dimH(a, b, y, 'EQ.'));
[[337, 350, 662], [337, 350, 684], [424, 437, 662], [424, 437, 684], [458, 490, 734], [490, 523, 734], [529, 548, 709], [646, 665, 741]]
    .forEach(([a, b, x]) => dimV(a, b, x, 'EQ.'));
path('thin', 'M570.500 296V323M619.500 293V311M726.500 293V311M775.500 293V323M526 326.500H568M526 375.500H553M526 852.500H568M526 803.500H553M570.500 854V886M619.500 866V886M726.500 866V886M775.500 854V886M954 914.500H976');

// sections
path('bold', 'M638.500 312V358H633M541 559.500H590V565M952.500 307V352H947M781.500 554V577M848 554V577M781.500 604V627H776M848 604V627H842M643 818H648M898 819H903');
path('thin', 'M535 399V393.500H567');
out += '<path d="M642.500 818V882M897.500 819V882" fill="none" stroke="#222" stroke-dasharray="20 4"/>';
section(638, 299, 'left', '2', 'A4.1.4');
section(952, 294, 'left', '2', 'A4.1.1');
section(530, 560, 'down', '1', 'A4.1.4');
section(523, 671, 'right', '2', 'A2.2.0');
section(643, 894, 'right', '2', 'A4.1.4');
section(898, 895, 'right', '1', 'A4.1.1');
section(981, 851, 'left', '', '');
text(973, 857, 'A');
text(653, 907, 'SIM.');
[[781, 544, '7'], [848, 544, '6']].forEach(([x, y, n]) => {
    out += `<circle class="thin" cx="${x}" cy="${y}" r="9"/>`;
    path('thin', `M${x - 9} ${y}h18`);
    text(x, y - 2, n);
    text(x, y + 6, 'A6.10');
});

['UNDER CABINET', 'TASK LIGHT (SHOWN', 'FOR CLARITY)'].forEach((s, i) => text(838, 740 + i * 7, s, 'left'));
['UNDER CABINET TASK', 'LIGHT (SHOWN FOR', 'CLARITY)'].forEach((s, i) => text(743, 862 + i * 7, s, 'left'));
path('thin', 'M876 738H890L880 719M741 861H735L727 831M794 861H801L820 820M827 366H832L842 350M926 366H930L940 349M896 685L907 682M755 809H760L764 803');
out += '<circle class="black" cx="842" cy="349" r="2"/><circle class="black" cx="940" cy="348" r="2"/><circle class="black" cx="768" cy="792" r="2"/>';

// equipment outside the west wall
path('thin', 'M570 665H560V690H570M560 678H555V686H560M570 694H560V724H570M560 709H558V723H560M570 730H564V747H570M570 794H567V803H570M570 807H567V815H570M570 819H567V827H570');
path('dash', 'M570 751H564V762H570M570 766H564V778H570');

// sheet edges
path('thin', 'M465 8.500H976M975.500 0V1063');
out += '<path d="M968.500 9V1063" stroke="#182018" fill="none"/><path d="M697 933.500h2" stroke="#222"/>';

document.getElementById('plan').insertAdjacentHTML('beforeend', out);
```
